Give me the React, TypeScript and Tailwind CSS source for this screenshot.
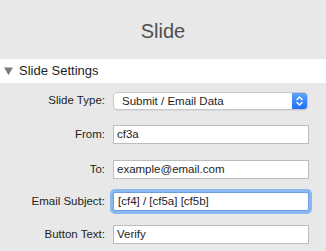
const fields = [
  { label: 'From:', value: 'cf3a', mt: 'mt-[15px]' },
  { label: 'To:', value: 'example@email.com', mt: 'mt-[16px]' },
  { label: 'Email Subject:', value: '[cf4] / [cf5a] [cf5b]', mt: 'mt-[13px]', focused: true },
  { label: 'Button Text:', value: 'Verify', mt: 'mt-[14px]' },
]

export default function App() {
  return (
    <div className="w-[326px] h-[251px] overflow-hidden bg-[#e8e8e8] font-['Liberation_Sans',Arial,sans-serif] text-[11.5px] text-[#1e1e1e]">
      {/* 标题 */}
      <div className="h-[59px] flex items-center justify-center">
        <h1 className="text-[20px] text-[#505050] pt-[3px]">Slide</h1>
      </div>

      {/* 分组标题 */}
      <div className="h-[24px] bg-white flex items-center pl-[4px] gap-[6px]">
        <svg width="9" height="8" viewBox="0 0 9 8" className="shrink-0">
          <path d="M0 0.5h9L4.5 8z" fill="#7b7b7b" />
        </svg>
        <span className="text-[13px] text-[#1e1e1e]">Slide Settings</span>
      </div>

      {/* 表单 */}
      <div className="pt-[9px] flex flex-col">
        <div className="flex items-center">
          <label className="w-[105px] text-right">Slide Type:</label>
          <div className="ml-[8px] w-[195px] h-[18px] flex bg-white border border-[#c8c8c8] rounded-[4px] overflow-hidden shadow-[0_1px_0_rgba(0,0,0,0.06)]">
            <span className="flex-1 pl-[8px] leading-[16px]">Submit / Email Data</span>
            <span className="w-[15px] h-full flex items-center justify-center bg-gradient-to-b from-[#5ea3fc] to-[#1b6ef5]">
              <svg width="7" height="10" viewBox="0 0 7 10">
                <path d="M1 3.5L3.5 1L6 3.5M1 6.5L3.5 9L6 6.5" fill="none" stroke="#fff" strokeWidth="1.4" strokeLinecap="round" strokeLinejoin="round" />
              </svg>
            </span>
          </div>
        </div>

        {fields.map((f) => (
          <div key={f.label} className={`flex items-center ${f.mt}`}>
            <label className="w-[105px] text-right">{f.label}</label>
            <div
              className={
                f.focused
                  ? 'ml-[8px] w-[196px] h-[19px] bg-white border border-[#6d9de2] rounded-[2px] shadow-[0_0_0_3px_#8cb8f0] pl-[4px] leading-[17px]'
                  : 'ml-[8px] w-[196px] h-[19px] bg-white border border-[#bdbdbd] pl-[3px] leading-[17px]'
              }
            >
              {f.value}
            </div>
          </div>
        ))}
      </div>
    </div>
  )
}
